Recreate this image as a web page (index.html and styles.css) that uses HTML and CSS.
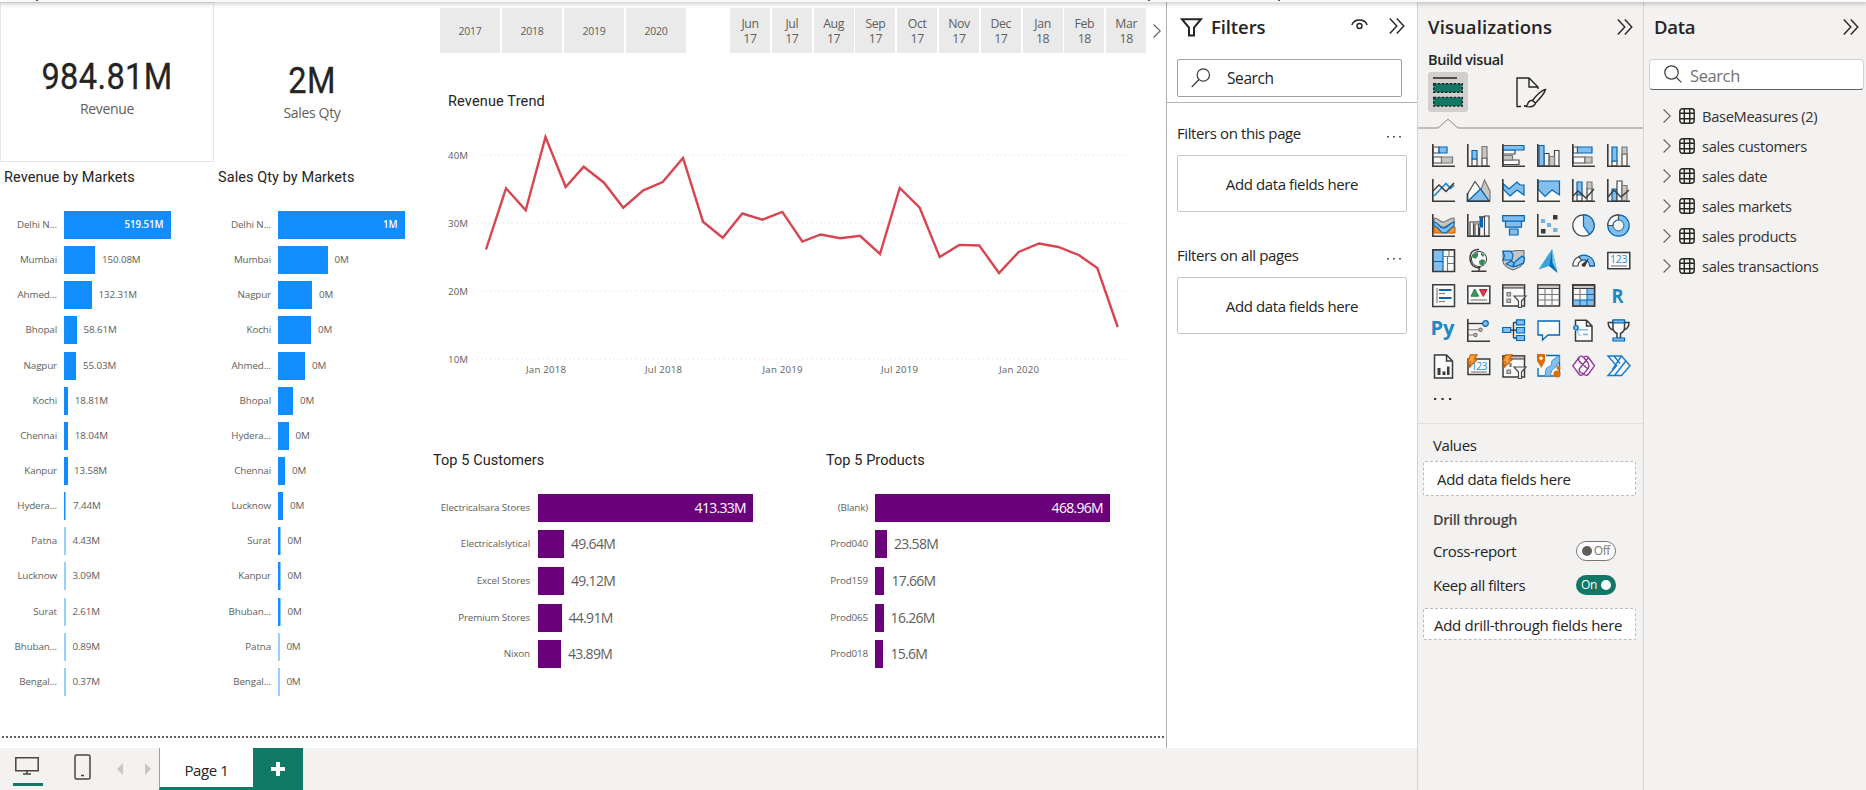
FILE: index.html
```html
<!DOCTYPE html>
<html lang="en">
<head>
<meta charset="utf-8">
<title>Sales Insights</title>
<link rel="stylesheet" href="styles.css">
</head>
<body>
<svg class="defs" width="0" height="0">
  <symbol id="axes" viewBox="0 0 24 24"><path class="ax" d="M.8 0V22.2H23"/></symbol>
  <symbol id="chevrons" viewBox="0 0 16 16"><path class="ln" d="M.8 .6 7.8 8 .8 15.4M7.8 .6l7 7.4-7 7.4"/></symbol>
  <symbol id="table" viewBox="0 0 16 16"><rect class="ln" x=".8" y=".8" width="14.4" height="14.4" rx="2.6"/><path class="ln" d="M5.3 1v14M10.7 1v14M1 5.3h14M1 10.7h14"/></symbol>
  <symbol id="chev" viewBox="0 0 8 14"><path class="thin" d="M.6.5 7.3 7 .6 13.5"/></symbol>
</svg>
<div class="ribbon-edge"></div>
<div class="app">
  <div class="workspace">
    <div class="stage">
      <main class="report">
        <div class="report-body">
          <div class="markets">
            <div class="cards">
              <section class="card framed"><div class="kpi">984.81M</div><div class="kpi-name">Revenue</div></section>
              <section class="card second"><div class="kpi">2M</div><div class="kpi-name">Sales Qty</div></section>
            </div>
            <div class="market-charts">
              <section class="chart rev">
                <h2>Revenue by Markets</h2>
                <div class="rows">
                  <div class="row"><span class="cat">Delhi N...</span><span class="bar in" style="width:106.5px">519.51M</span></div>
                  <div class="row"><span class="cat">Mumbai</span><span class="bar" style="width:31px"></span><span class="val">150.08M</span></div>
                  <div class="row"><span class="cat">Ahmed...</span><span class="bar" style="width:27.5px"></span><span class="val">132.31M</span></div>
                  <div class="row"><span class="cat">Bhopal</span><span class="bar" style="width:12.5px"></span><span class="val">58.61M</span></div>
                  <div class="row"><span class="cat">Nagpur</span><span class="bar" style="width:12px"></span><span class="val">55.03M</span></div>
                  <div class="row"><span class="cat">Kochi</span><span class="bar" style="width:4.4px"></span><span class="val near">18.81M</span></div>
                  <div class="row"><span class="cat">Chennai</span><span class="bar" style="width:4.4px"></span><span class="val near">18.04M</span></div>
                  <div class="row"><span class="cat">Kanpur</span><span class="bar" style="width:3.6px"></span><span class="val near">13.58M</span></div>
                  <div class="row"><span class="cat">Hydera...</span><span class="bar slim" style="width:2px"></span><span class="val">7.44M</span></div>
                  <div class="row"><span class="cat">Patna</span><span class="bar faint" style="width:2px"></span><span class="val near">4.43M</span></div>
                  <div class="row"><span class="cat">Lucknow</span><span class="bar faint" style="width:2px"></span><span class="val near">3.09M</span></div>
                  <div class="row"><span class="cat">Surat</span><span class="bar faint" style="width:2px"></span><span class="val near">2.61M</span></div>
                  <div class="row"><span class="cat">Bhuban...</span><span class="bar faint" style="width:2px"></span><span class="val near">0.89M</span></div>
                  <div class="row"><span class="cat">Bengal...</span><span class="bar faint" style="width:2px"></span><span class="val near">0.37M</span></div>
                </div>
              </section>
              <section class="chart qty">
                <h2>Sales Qty by Markets</h2>
                <div class="rows">
                  <div class="row"><span class="cat">Delhi N...</span><span class="bar in" style="width:126.5px">1M</span></div>
                  <div class="row"><span class="cat">Mumbai</span><span class="bar" style="width:49.5px"></span><span class="val">0M</span></div>
                  <div class="row"><span class="cat">Nagpur</span><span class="bar" style="width:34px"></span><span class="val">0M</span></div>
                  <div class="row"><span class="cat">Kochi</span><span class="bar" style="width:33px"></span><span class="val">0M</span></div>
                  <div class="row"><span class="cat">Ahmed...</span><span class="bar" style="width:27px"></span><span class="val">0M</span></div>
                  <div class="row"><span class="cat">Bhopal</span><span class="bar" style="width:15px"></span><span class="val">0M</span></div>
                  <div class="row"><span class="cat">Hydera...</span><span class="bar" style="width:10.6px"></span><span class="val">0M</span></div>
                  <div class="row"><span class="cat">Chennai</span><span class="bar" style="width:7px"></span><span class="val">0M</span></div>
                  <div class="row"><span class="cat">Lucknow</span><span class="bar" style="width:5px"></span><span class="val">0M</span></div>
                  <div class="row"><span class="cat">Surat</span><span class="bar slim" style="width:2.6px"></span><span class="val">0M</span></div>
                  <div class="row"><span class="cat">Kanpur</span><span class="bar slim" style="width:2.6px"></span><span class="val">0M</span></div>
                  <div class="row"><span class="cat">Bhuban...</span><span class="bar slim" style="width:2.6px"></span><span class="val">0M</span></div>
                  <div class="row"><span class="cat">Patna</span><span class="bar faint" style="width:2px"></span><span class="val near">0M</span></div>
                  <div class="row"><span class="cat">Bengal...</span><span class="bar faint" style="width:2px"></span><span class="val near">0M</span></div>
                </div>
              </section>
            </div>
          </div>
          <div class="insights">
            <div class="slicers">
              <div class="years"><span>2017</span><span>2018</span><span>2019</span><span>2020</span></div>
              <div class="months"><span>Jun<br>17</span><span>Jul<br>17</span><span>Aug<br>17</span><span>Sep<br>17</span><span>Oct<br>17</span><span>Nov<br>17</span><span>Dec<br>17</span><span>Jan<br>18</span><span>Feb<br>18</span><span>Mar<br>18</span></div>
              <svg class="next" width="8" height="14"><use href="#chev"/></svg>
            </div>
            <section class="trend">
              <h2>Revenue Trend</h2>
              <svg class="plot" width="700" height="260" viewBox="440 120 700 260">
                <path class="grid" d="M477 155H1126M477 223H1126M477 291H1126M477 359H1126"/>
                <g class="axis">
                  <text x="448" y="158.5" textLength="20">40M</text><text x="448" y="226.5" textLength="20">30M</text><text x="448" y="294.5" textLength="20">20M</text><text x="448" y="362.5" textLength="20">10M</text>
                  <text x="526" y="372.5" textLength="40">Jan 2018</text><text x="645" y="372.5" textLength="37">Jul 2018</text><text x="762.5" y="372.5" textLength="40">Jan 2019</text><text x="881" y="372.5" textLength="37">Jul 2019</text><text x="999" y="372.5" textLength="40">Jan 2020</text>
                </g>
                <polyline class="line" points="486,249.5 506,188.3 525.7,210.3 545.5,137 565.7,187 583.7,166.7 604,182.7 623.3,207.7 643.3,190.3 662.7,182 683,158 703,221.7 722.7,237.7 742.3,213.5 762.3,219.7 782.3,211.9 802.3,241.5 820.7,234.5 840.3,238.3 860,235.8 880,254 899.7,187.9 919.7,207.7 939.7,257 959.3,244.9 979.3,245.5 999,273 1018.7,252 1039,243.5 1058.3,247 1078.7,255 1097.3,268 1117.7,327"/>
              </svg>
            </section>
            <div class="tops">
              <section class="chart top customers">
                <h2>Top 5 Customers</h2>
                <div class="rows">
                  <div class="row"><span class="cat">Electricalsara Stores</span><span class="bar in" style="width:215px">413.33M</span></div>
                  <div class="row"><span class="cat">Electricalslytical</span><span class="bar" style="width:26px"></span><span class="val">49.64M</span></div>
                  <div class="row"><span class="cat">Excel Stores</span><span class="bar" style="width:26px"></span><span class="val">49.12M</span></div>
                  <div class="row"><span class="cat">Premium Stores</span><span class="bar" style="width:23.5px"></span><span class="val">44.91M</span></div>
                  <div class="row"><span class="cat">Nixon</span><span class="bar" style="width:23px"></span><span class="val">43.89M</span></div>
                </div>
              </section>
              <section class="chart top products">
                <h2>Top 5 Products</h2>
                <div class="rows">
                  <div class="row"><span class="cat">(Blank)</span><span class="bar in" style="width:235px">468.96M</span></div>
                  <div class="row"><span class="cat">Prod040</span><span class="bar" style="width:12px"></span><span class="val">23.58M</span></div>
                  <div class="row"><span class="cat">Prod159</span><span class="bar" style="width:9.4px"></span><span class="val">17.66M</span></div>
                  <div class="row"><span class="cat">Prod065</span><span class="bar" style="width:8.6px"></span><span class="val">16.26M</span></div>
                  <div class="row"><span class="cat">Prod018</span><span class="bar" style="width:8.4px"></span><span class="val">15.6M</span></div>
                </div>
              </section>
            </div>
          </div>
        </div>
        <div class="page-edge"></div>
      </main>
      <aside class="filters">
        <header>
          <div class="pane-title">
            <svg width="21" height="19" viewBox="0 0 21 19"><path d="M1 1.2H20L13 9.5V17.6H8V9.5Z" fill="none" stroke="#252423" stroke-width="2"/></svg>
            <span class="ttl">Filters</span>
            <svg class="eye" width="17" height="11" viewBox="0 0 17 11"><path class="ln" d="M.8 6C2 3 5 1 8.500 1s6.500 2 7.700 5"/><circle class="ln" cx="8.5" cy="7" r="2.5"/></svg>
            <svg width="16" height="16"><use href="#chevrons"/></svg>
          </div>
          <div class="search"><svg width="20" height="20" viewBox="0 0 20 20"><circle class="thin2" cx="12.3" cy="7" r="6.2"/><path class="thin2" d="M8 11.500.7 19"/></svg><span>Search</span></div>
        </header>
        <div class="fsec"><span>Filters on this page</span><svg width="14" height="4"><path class="dots" d="M.2 1h1.600v1.600H.2zM6.200 1h1.600v1.600H6.200zM12.200 1h1.600v1.600h-1.600z"/></svg></div>
        <div class="drop">Add data fields here</div>
        <div class="fsec f2"><span>Filters on all pages</span><svg width="14" height="4"><path class="dots" d="M.2 1h1.600v1.600H.2zM6.200 1h1.600v1.600H6.200zM12.200 1h1.600v1.600h-1.600z"/></svg></div>
        <div class="drop">Add data fields here</div>
      </aside>
    </div>
    <footer class="tabs">
      <div class="view active"><svg width="24" height="18" viewBox="0 0 24 18"><path class="dev" d="M.8.8h22.400v13H.8zM12 14v3M8 17h8"/></svg></div>
      <div class="view phone"><svg width="17" height="26" viewBox="0 0 17 26"><rect class="dev" x="1" y="1" width="15" height="24" rx="1.5"/><path class="dev" d="M7 21.500h3"/></svg></div>
      <svg class="nav" width="34" height="12" viewBox="0 0 34 12"><path d="M6 0V12L0 6ZM28 0V12L34 6Z"/></svg>
      <div class="page">Page 1</div>
      <div class="add"><svg width="14" height="14" viewBox="0 0 14 14"><path d="M7 0V14M0 7H14" stroke="#fff" stroke-width="4"/></svg></div>
    </footer>
  </div>

  <aside class="viz">
    <div class="pane-title"><span class="ttl">Visualizations</span><svg width="16" height="16"><use href="#chevrons"/></svg></div>
    <div class="build">Build visual</div>
    <div class="modes">
      <div class="mode on"><svg width="30" height="30" viewBox="0 0 30 30"><path d="M0 1h24" stroke="#252423" stroke-width="1.5"/><g fill="#117865" stroke="#252423" stroke-width="1.4" stroke-dasharray="2.5 1.5"><rect x=".7" y="6.7" width="28.6" height="8.6"/><rect x=".7" y="20.4" width="28.6" height="8.6"/></g></svg></div>
      <div class="mode"><svg width="31" height="31" viewBox="0 0 31 31" class="ln"><path d="M5 29.500H1V1H13L22 10V12M13 1V10H22"/><path d="M29.500 12.500C26 13 20 18.500 16.500 23.500L19.500 26C23.500 22 28.500 16 29.500 12.500ZM16.500 23.500C13 23 12 25.500 11.500 27.500 11 29 9 29 8 28.800 12 30.500 18.500 30.500 19.500 26"/></svg></div>
    </div>
    <svg class="notch" width="225" height="11" viewBox="0 0 225 11"><path d="M0 9.500H20L30 .7 40 9.500H225"/></svg>
    <div class="gallery">
      <svg viewBox="0 0 24 24"><path class="w" d="M1 3h6v6H1zM1 13h8.500v6H1z"/><path class="b" d="M7 3h8v6H7z"/><path class="g" d="M9.500 13h11v6h-11z"/><use href="#axes"/></svg>
      <svg viewBox="0 0 24 24"><path class="w" d="M5 15h5v7H5zM15 14h5v8h-5z"/><path class="b" d="M5 6.500h5v8.500H5z"/><path class="g" d="M15 2.500h5V14h-5z"/><use href="#axes"/></svg>
      <svg viewBox="0 0 24 24"><path class="w" d="M1 6h12v4H1zM1 16h16v4.500H1z"/><path class="g" d="M1 11.500h9.500V16H1z"/><path class="b" d="M1 1.500h21V6H1z"/><use href="#axes"/></svg>
      <svg viewBox="0 0 24 24"><path class="w" d="M7 9.500h5V22H7zM17.500 6.500H22V22h-4.500z"/><path class="g" d="M12.500 12.500h5V22h-5z"/><path class="b" d="M2 1.500h5V22H2z"/><use href="#axes"/></svg>
      <svg viewBox="0 0 24 24"><path class="w" d="M1 3h4.500v6H1zM1 13h12v6H1z"/><path class="b" d="M5.500 3H20v6H5.500z"/><path class="g" d="M13 13h7v6h-7z"/><use href="#axes"/></svg>
      <svg viewBox="0 0 24 24"><path class="w" d="M5 17h5v5H5zM15 10h5v12h-5z"/><path class="b" d="M5 3h5v14H5z"/><path class="g" d="M15 3h5v7h-5z"/><use href="#axes"/></svg>

      <svg viewBox="0 0 24 24"><path class="bl" d="M2 17 14 4.500l4.500 5L22 6"/><path class="dl" d="M1 12 7 6l7 6.500 8-8.500"/><use href="#axes"/></svg>
      <svg viewBox="0 0 24 24"><path class="g" d="M10 22 17.500 1 23 12V22Z"/><path class="w" d="M.5 15 8 2.500 17 15v7H.5Z"/><path class="b" d="M1 22 13.500 10 22 22Z"/><path class="ax" d="M.5 14V22.200H23"/></svg>
      <svg viewBox="0 0 24 24"><path d="M1 11l7 7 7-6 7 5v5H1z" fill="#fafafa"/><path class="b" d="M1 4.500 7 10l8-7 3 3h4V16L15 11 8 17 1 10Z"/><use href="#axes"/></svg>
      <svg viewBox="0 0 24 24"><path d="M1 9l7 8 7-6 7 5v6H1z" fill="#fafafa"/><path class="b" d="M1 2H22.500V16L15 11 8 17.500 1 10Z"/><use href="#axes"/></svg>
      <svg viewBox="0 0 24 24"><path class="w" d="M5 14h5v8H5zM15 9h5v13h-5z"/><path class="b" d="M5 3h5v13H5z"/><path class="g" d="M15 3h5v7h-5z"/><path class="dl" d="M1 17 6 12l8 7 8-9"/><use href="#axes"/></svg>
      <svg viewBox="0 0 24 24"><path class="b" d="M5 10h5v12H5z"/><path class="w" d="M10 2h5v20h-5z"/><path class="g" d="M15 6.500h5V22h-5z"/><path class="dl" d="M1 18 7 11l7 7 8-7"/><use href="#axes"/></svg>

      <svg viewBox="0 0 24 24"><path d="M2 12h6l3 5h3l3-4h6v6H2z" fill="#f2912a" stroke="#c05a00"/><path class="g" d="M2 4c5 0 6 5 10 4s5-4 10-4v5c-5 0-5 3-10 4S7 9 2 9Z"/><path class="b" d="M2 8c5 0 5 7 10 6s5-5 10-6v4c-4 1-5 7-10 7S7 12 2 12Z"/><use href="#axes"/></svg>
      <svg viewBox="0 0 24 24"><path class="w" d="M3 8h3.500v14H3zM8 8h3.500v14H8zM17.500 2H22v20h-4.500z"/><path class="g" d="M6.500 8h7v2h-7z"/><path d="M12.500 3.500h3.500v10h-3.500z" fill="#0067b8"/><path class="dl" d="M12.500 22V13.500M12 3h5"/><use href="#axes"/></svg>
      <svg viewBox="0 0 24 24"><path class="b" d="M7.500 15h8.500v6H7.500zM.7 1.700h21.600v5.500H.7zM3.500 7.200h16v6h-16z"/></svg>
      <svg viewBox="0 0 24 24"><path fill="#3b3a39" d="M16 1h4.500v4.500H16zM4 15h4.500v4.500H4z"/><path fill="#6fb2e6" d="M4 5h4v4H4zM10 9h4v4h-4zM16 14h4.500v4H16z"/><use href="#axes"/></svg>
      <svg viewBox="0 0 24 24"><circle cx="11.5" cy="11.5" r="10.7" class="w"/><path class="b" d="M11.500.8A10.700 10.700 0 0 1 17.500 20.300L11.500 12Z"/></svg>
      <svg viewBox="0 0 24 24"><circle cx="11.5" cy="11.5" r="10.7" class="b"/><path class="w" d="M11.500.8V6A5.500 5.500 0 0 0 6 11.500H.8A10.700 10.700 0 0 1 11.500.8Z"/><circle cx="11.5" cy="11.5" r="5.4" fill="#f3f2f1" stroke="#0067b8"/></svg>

      <svg viewBox="0 0 24 24"><path class="w" d="M1 1h21.500v21.500H1z"/><path class="b" d="M1 1h10v21.500H1zM1 12.500h10"/><path class="gl" d="M11 7.500h11M17 1v6.500M15.500 7.500v15M15.500 14.500h7"/><path class="frame" d="M.8.8h21.700v21.700H.8z"/></svg>
      <svg viewBox="0 0 24 24"><circle cx="12" cy="10" r="7.6" fill="#fafafa" stroke="#3b3a39"/><path fill="#2f8f4e" d="M6 5.500 11 3v4L8.500 10 5 8zM12 12l3.500-2 3 2-2.500 4.500-3.500-1zM14 3.500l3.500 2.500L16 8l-2-2z"/><path class="dl" d="M12 .5C6 0 2.500 4 3 10s5 10 10.500 8.500M12 18v4M4.500 22.300h15"/></svg>
      <svg viewBox="0 0 24 24"><path fill="#c8c6c4" stroke="#605e5c" d="M1 3c4-1 7 1 10-1 4-1 7 0 11-.5V13c-1 4-6 6-11 8C6 19 1 17 1 12Z"/><path class="b" d="M.8 2.200H9L11 6 10 11H1L2.500 7ZM11 16l3-4 6-5 2.500 2-1 5-8 3.500ZM4 15l5-3 3 2-1 4Z" stroke-width="1"/></svg>
      <svg viewBox="0 0 24 24"><path fill="#38a4d8" d="M15 0 1.500 20.500 12 17Z"/><path fill="#0c6db8" d="m12 17 8.500 7L15 0Z"/><path fill="#74d0ec" d="m15 0 5.500 23-5-9Z"/></svg>
      <svg viewBox="0 0 24 24"><path class="b" d="M7 7.500A10.500 10.500 0 0 1 22.500 17h-5A5.500 5.500 0 0 0 9.500 11.500Z"/><path class="w" d="M.8 17A10.500 10.500 0 0 1 7 7.500L9.500 11.500A6 6 0 0 0 6 17ZM22.500 17h-5"/><path d="M10 15 17 9l-3.500 8c-2 2-5 0-3.500-2Z" fill="#3b3a39"/></svg>
      <svg viewBox="0 0 24 24"><path class="w2" d="M.8 3.500h22v16.300H.8z"/><text class="num" x="3" y="14.2" textLength="17.5">123</text><path class="gl" d="M4 17h16"/></svg>

      <svg viewBox="0 0 24 24"><path class="w2" d="M.8.8h21.700v21.700H.8z"/><path d="M7 6h12.500M7 14h12.500" stroke="#0067b8" stroke-width="2.2"/><path class="gl" d="M5 4v15M7 9.500h6M7 17.500h6"/></svg>
      <svg viewBox="0 0 24 24"><path class="w2" d="M.8 2h22v17.500H.8z"/><path d="M4 12.200h7.500L7.800 5z" fill="#3f9c5c" stroke="#1f7a3d"/><path d="M12.500 5.500h7.500l-3.700 7z" fill="#e03a46" stroke="#b9202c"/><path class="gl" d="M3.500 16h16.500"/></svg>
      <svg viewBox="0 0 24 24"><path class="w2" d="M.8 1h21.700v21H.8z"/><path d="M1 1h21.500v3H1z" class="g2"/><path class="g" d="M5 8.500h3.500V12H5zM5 15h3.500v3.500H5z"/><path class="w" d="M12 12H24l-4.500 5v6.500h-3V17Z"/></svg>
      <svg viewBox="0 0 24 24"><path class="w2" d="M.8 1h21.700v21H.8z"/><path class="g2" d="M.8 1h21.700v3.500H.8z"/><path class="gl" d="M8 4.500V22M15 4.500V22M1 10.500h21.500M1 16h21.500"/></svg>
      <svg viewBox="0 0 24 24"><path class="w2" d="M.8 1h21.700v21H.8z"/><path fill="#83beec" d="M15 4.500h7V22H1.500V16H15Z"/><path class="g2" d="M.8 1h21.700v3.500H.8z"/><path class="gl" d="M8 4.500V16M1 10.500h14"/><path d="M15 4.500V22M8 16v6M15 10.500h7M1 16h21.500" stroke="#0067b8"/><path class="frame" d="M.8 1h21.700v21H.8z"/></svg>
      <svg viewBox="0 0 24 24"><text class="lang" x="4.5" y="18.8" textLength="12" lengthAdjust="spacingAndGlyphs">R</text></svg>

      <svg viewBox="0 0 24 24"><text class="lang" x="-1.5" y="16" textLength="24" lengthAdjust="spacingAndGlyphs">Py</text></svg>
      <svg viewBox="0 0 24 24"><path class="dl" d="M1 4.500h15"/><path class="gl" d="M1 10.800h11M1 16h6"/><circle class="b" cx="18.5" cy="4.5" r="2.8"/><circle class="g" cx="13.5" cy="10.8" r="1.6"/><circle class="g" cx="8.5" cy="16" r="1.6"/><use href="#axes"/></svg>
      <svg viewBox="0 0 24 24"><path class="dl" d="M8 11.200h6M11.500 3.500v15.500M11.500 3.500H15M11.500 19H15"/><path class="b" d="M.7 8.500h8v5h-8zM14.500.8h8v5h-8zM14.500 8.500h8v5.500h-8zM14.500 16.500h8v5h-8z"/></svg>
      <svg viewBox="0 0 24 24"><path d="M1 2h21.500v14H11l-5.500 5V16H1z" fill="#fafafa" stroke="#0067b8" stroke-width="1.3"/></svg>
      <svg viewBox="0 0 24 24"><path class="w2" d="M3.500 12v10H20V7L14.500 1.200H3.500V6M14.500 1.200V7H20"/><path d="M7 10.800h9M11 15.500h5" stroke="#6fb2e6" stroke-width="1.3"/><path d="M6 11v4M9 16h-3" stroke="#6fb2e6"/><circle class="b" cx="4" cy="8.8" r="2.3"/></svg>
      <svg viewBox="0 0 24 24"><path class="w2" d="M6 3.500H1.200c0 4 1.500 6.500 5.300 7.500M17 3.500h5c0 4-1.500 6.500-5.500 7.500"/><path class="w2" d="M6 2H17.500V9c0 3-2 4.500-4 5.500v5h-3.500v-5C8 13.500 6 12 6 9Z"/><path class="b" d="M6 .8h11.500v3H6zM6 19h11.500v3H6z"/></svg>

      <svg viewBox="0 0 24 24"><path class="w2" d="M2.500 1h12L20.500 7V24h-18zM14.500 1v6H20"/><path fill="#3b3a39" d="M5.500 14h3v7h-3zM10.500 17.500h3V21h-3zM15 12.500h2.500V21H15z"/></svg>
      <svg viewBox="0 0 24 24"><path class="w2" d="M1 5h21.700v15.500H1z"/><text class="num" x="4" y="15.7" textLength="16.5">123</text><path class="gl" d="M4 18h16"/><path class="bolt" d="M3.500.8H10L7.500 5h3L1.500 14 3.500 8H.5Z"/></svg>
      <svg viewBox="0 0 24 24"><path class="w2" d="M1 2h21.500v21H1z"/><path class="g2" d="M1 2h21.500v3H1z"/><path class="g" d="M5 16h3.500v3.500H5zM8 9.500h1v3H8z"/><path class="w" d="M12 13H24l-4.500 5v6.500h-3V18Z"/><path class="bolt" d="M3.500.8H10L7.500 5h3L1.500 14 3.500 8H.5Z"/></svg>
      <svg viewBox="0 0 24 24"><path d="M9 1.500H22.500V22H1V14" fill="#fafafa" stroke="#0067b8" stroke-width="1.3"/><path d="M22 1.500 15 6.500l-1 5-5 3-1 7.500h5l2-6 5-4 2.500-5Z" fill="#83beec" stroke="#4b97d2"/><path d="M0 0h8v7L4.500 14 0 7z" fill="#e06c00"/><circle cx="4" cy="4.2" r="1.7" fill="#fff"/><circle cx="20" cy="20" r="3.5" fill="#e06c00"/><circle cx="21.5" cy="14" r="2" fill="#e06c00"/></svg>
      <svg viewBox="0 0 24 24"><path d="M.8 11.800 7 3.500Q8.500 1.500 10.500 2.500L11.700 3.700 13 2.500Q15 1.500 16.500 3.500L22.500 11.800 16.500 20Q15 22 13 21L11.700 19.800 10.500 21Q8.500 22 7 20ZM11.700 3.700l4.500 5.500q1.500 2.600 0 5.200l-4.500 5.400M16.500 3.500 7.500 14.500q-1 2.500 1 4l3.200 1.300M7 3.500q-1 3 1 4.500l8 7" fill="#fafafa" stroke="#8c2f9b" stroke-width="1.3"/></svg>
      <svg viewBox="0 0 24 24"><path d="M1 2h13.500L23 11.800 14.500 21.500H1L9.500 11.800ZM7 2l6 7.500M14.500 2 5.500 15.500M18.500 7.500 7.500 21.500" fill="#fafafa" stroke="#1478d4" stroke-width="1.4"/></svg>
    </div>
    <div class="more"><svg width="18" height="4"><path class="dots" d="M0 1h2.200v2H0zM7.500 1h2.200v2H7.500zM15 1h2.200v2H15z"/></svg></div>
    <div class="wells">
      <div class="lbl">Values</div>
      <div class="well">Add data fields here</div>
      <div class="lbl head">Drill through</div>
      <div class="opt"><span>Cross-report</span><span class="toggle off"><i></i><b>Off</b></span></div>
      <div class="opt keep"><span>Keep all filters</span><span class="toggle on"><b>On</b><i></i></span></div>
      <div class="well drill">Add drill-through fields here</div>
    </div>
  </aside>

  <aside class="data">
    <div class="pane-title"><span class="ttl">Data</span><svg width="16" height="16"><use href="#chevrons"/></svg></div>
    <div class="find"><svg width="18" height="18" viewBox="0 0 18 18"><circle class="thin2" cx="7.5" cy="7.5" r="6.7"/><path class="thin2" d="m12.300 12.300 5 5"/></svg><span>Search</span></div>
    <ul>
      <li><svg width="8" height="14"><use href="#chev"/></svg><svg width="16" height="16"><use href="#table"/></svg><span>BaseMeasures (2)</span></li>
      <li><svg width="8" height="14"><use href="#chev"/></svg><svg width="16" height="16"><use href="#table"/></svg><span>sales customers</span></li>
      <li><svg width="8" height="14"><use href="#chev"/></svg><svg width="16" height="16"><use href="#table"/></svg><span>sales date</span></li>
      <li><svg width="8" height="14"><use href="#chev"/></svg><svg width="16" height="16"><use href="#table"/></svg><span>sales markets</span></li>
      <li><svg width="8" height="14"><use href="#chev"/></svg><svg width="16" height="16"><use href="#table"/></svg><span>sales products</span></li>
      <li><svg width="8" height="14"><use href="#chev"/></svg><svg width="16" height="16"><use href="#table"/></svg><span>sales transactions</span></li>
    </ul>
  </aside>
</div>
</body>
</html>
```

FILE: styles.css
```css
* { box-sizing: border-box; }
body { margin: 0; width: 1866px; height: 790px; overflow: hidden; background: #fff; color: #252423; font: 15px/20px "Open Sans", "Noto Sans", sans-serif; letter-spacing: -.4px; }
svg { display: block; flex: none; overflow: visible; }
.defs { position: absolute; }
h2 { margin: 0; font: 400 14.5px/20px Roboto, sans-serif; letter-spacing: .07px; white-space: nowrap; }

/* shared strokes */
.ax { fill: none; stroke: #3b3a39; stroke-width: 1.6; }
.ln { fill: none; stroke: #252423; stroke-width: 1.4; }
.thin { fill: none; stroke: #605e5c; stroke-width: 1.1; }
.thin2 { fill: none; stroke: #3b3a39; stroke-width: 1.2; }
.dots { fill: #323130; }

.ribbon-edge { height: 2px; background: linear-gradient(#555, #555) 36px 0 / 2px 1px no-repeat, linear-gradient(#555, #555) 1148px 0 / 2px 1px no-repeat, linear-gradient(#555, #555) 1278px 0 / 2px 1px no-repeat, #fafafa; box-shadow: 0 1px 4px 1px rgba(0,0,0,.22); position: relative; z-index: 2; }
.app { display: flex; height: 788px; }
.workspace { width: 1417px; display: flex; flex-direction: column; }
.stage { height: 746px; display: flex; }
.report { width: 1166px; }
.report-body { display: flex; height: 734px; }
.page-edge { height: 2px; margin: 0 2px; background: repeating-linear-gradient(90deg, #605e5c 0 2px, transparent 2px 4px); }

/* left half of the report */
.markets { width: 420px; }
.cards { display: flex; height: 160px; }
.card { width: 214px; padding-top: 54px; text-align: center; }
.card.framed { border: 1px solid #e6e6e6; }
.card.second { width: 196px; padding-top: 59px; }
.kpi { font: 400 36px/40px Roboto, sans-serif; letter-spacing: .4px; transform: scaleX(.905); white-space: nowrap; -webkit-text-stroke: .3px #252423; }
.kpi-name { font-size: 14px; line-height: 20px; color: #605e5c; letter-spacing: -.35px; margin-top: 2px; }
.market-charts { display: flex; }
.chart .rows { display: flex; flex-direction: column; }
.row { display: flex; align-items: center; height: 35.15px; font-size: 9.8px; letter-spacing: -.12px; color: #605e5c; white-space: nowrap; }
.cat { width: 57px; margin-right: 7px; text-align: right; flex: none; }
.bar { height: 28px; background: #118dff; flex: none; display: block; }
.bar.in { color: #fff; font-weight: 600; line-height: 28px; text-align: right; padding-right: 7px; }
.bar.slim { border-right: 1px solid #8bc5ff; }
.bar.faint { background: #9bcdff; }
.val { margin-left: 7px; }
.val.near { margin-left: 6.4px; }
.rev { width: 214px; padding-top: 6px; }
.rev h2 { padding-left: 4px; }
.rev .rows, .qty .rows { padding-top: 19.5px; }
.qty { padding-top: 6px; }
.qty h2 { padding-left: 4px; }

/* right half of the report */
.insights { width: 746px; }
.slicers { display: flex; padding: 6px 0 0 20px; color: #605e5c; }
.years, .months { display: flex; gap: 2px; text-align: center; }
.years span { width: 60px; height: 45px; background: #eaeaea; font-size: 10.5px; line-height: 47px; letter-spacing: -.3px; }
.months { margin-left: 44px; gap: 1.8px; }
.months span { width: 40px; height: 45px; background: #eaeaea; font-size: 12.3px; line-height: 14.7px; padding-top: 9px; letter-spacing: -.4px; }
.next { margin: 16px 0 0 7px; }
.trend { padding: 39px 0 0 20px; height: 340px; }
.trend h2 { padding-left: 8px; letter-spacing: .15px; }
.plot { margin-top: 8px; }
.grid { stroke: #d8d8d8; stroke-width: 1; stroke-dasharray: 1 3.4; }
.axis text { font-size: 9.7px; letter-spacing: 0; fill: #605e5c; }
.line { fill: none; stroke: #d64550; stroke-width: 2.4; stroke-linejoin: miter; }
.tops { display: flex; padding-top: 58px; }
.top .rows { padding-top: 18.6px; }
.top .row { height: 36.6px; }
.top .bar { background: #6b007b; height: 28px; }
.top .val, .top .bar.in { font-size: 14px; font-weight: 400; letter-spacing: -.7px; }
.customers { width: 393px; }
.customers h2 { padding-left: 13px; }
.customers .cat { width: 110px; margin-right: 8px; }
.products h2 { padding-left: 13px; }
.products .cat { width: 55px; }

/* panes */
.pane-title { display: flex; align-items: center; }
.ttl { font-size: 18.5px; font-weight: 600; line-height: 24px; letter-spacing: -.3px; flex: 1; }
.filters { width: 251px; border-left: 1px solid #b3b0ad; }
.filters header { height: 101px; padding: 13px 0 0 10px; border-bottom: 1px solid #b3b0ad; }
.filters .pane-title { padding: 0 12px 0 4px; height: 24px; }
.filters .ttl { padding-left: 9px; letter-spacing: -.1px; }
.eye { margin: -5px 21px 0 0; }
.filters .pane-title svg:last-child { margin-top: -2px; }
.search { width: 225px; height: 38px; margin-top: 20px; border: 1px solid #a19f9d; border-radius: 2px; display: flex; align-items: center; padding-left: 13px; gap: 16px; font-size: 15.5px; }
.fsec { display: flex; justify-content: space-between; align-items: center; padding: 0 16px 0 10px; margin-top: 20px; height: 20px; }
.fsec svg { margin-top: 7px; }
.fsec.f2 { margin-top: 33px; }
.drop { width: 230px; height: 57px; margin: 12px 0 0 10px; border: 1px solid #c8c6c4; border-radius: 2px; text-align: center; line-height: 57px; }

.viz, .data { background: #f3f2f1; }
.viz { width: 227px; border: solid #d6d4d2; border-width: 0 1px; }
.viz .pane-title { padding: 13px 10px 0 10px; }
.viz .ttl { letter-spacing: .1px; }
.build { padding-left: 10px; margin-top: 11px; height: 20px; font-weight: 600; font-size: 14.5px; }
.modes { display: flex; padding-left: 10px; margin-top: 2px; gap: 43px; }
.mode { width: 40px; height: 40px; padding: 5px; }
.mode.on { background: #d2d0ce; border-radius: 3px; }
.notch { margin-top: 6px; padding-top: 0; fill: none; stroke: #8a8886; height: 12px; }
.gallery { display: grid; grid-template-columns: repeat(6, 35px); grid-auto-rows: 35px; padding: 13.500px 0 0 14px; height: 263px; }
.gallery svg { width: 24px; height: 24px; }
.w { fill: #fafafa; stroke: #4a4948; stroke-width: 1.2; }
.w2 { fill: #fafafa; stroke: #3b3a39; stroke-width: 1.5; }
.frame { fill: none; stroke: #3b3a39; stroke-width: 1.5; }
.b { fill: #83beec; stroke: #0067b8; stroke-width: 1.2; }
.g { fill: #c8c6c4; stroke: #797775; stroke-width: 1.2; }
.g2 { fill: #c8c6c4; stroke: #3b3a39; stroke-width: 1.2; }
.dl { fill: none; stroke: #3b3a39; stroke-width: 1.4; }
.bl { fill: none; stroke: #1f86d0; stroke-width: 1.7; }
.gl { fill: none; stroke: #797775; stroke-width: 1.1; }
.bolt { fill: #f9a13c; stroke: #c85f00; stroke-width: 1.2; }
.num { font-size: 10.5px; fill: #2b8bd3; letter-spacing: 0; }
.lang { font-size: 20px; font-weight: 700; fill: #2086c5; letter-spacing: 0; }
.more { padding: 4px 0 0 16px; height: 31px; border-bottom: 1px solid #e1dfdd; }
.wells { padding: 11px 7px 0 5px; }
.lbl { padding-left: 10px; height: 20px; }
.lbl.head { margin-top: 14px; color: #484644; font-weight: 600; font-size: 14.5px; }
.well { height: 35px; margin-top: 6px; border: 1px dashed #bdbbb9; border-radius: 2px; background: #fff; line-height: 34px; padding-left: 13px; white-space: nowrap; letter-spacing: -.33px; }
.well.drill { height: 32px; line-height: 32px; padding-left: 10px; margin-top: 13px; letter-spacing: -.3px; }
.opt { display: flex; justify-content: space-between; align-items: center; padding: 0 20px 0 10px; height: 20px; margin-top: 11px; }
.opt.keep { margin-top: 14px; }
.toggle { width: 40px; height: 20px; border-radius: 10px; display: flex; align-items: center; padding: 0 5px; justify-content: space-between; font-size: 12px; }
.toggle b { font-weight: 400; }
.toggle i { width: 10px; height: 10px; border-radius: 50%; background: #605e5c; }
.toggle.off { border: 1px solid #797775; background: #fff; color: #797775; }
.toggle.on { background: #117865; color: #fff; }
.toggle.on i { background: #fff; }

.data { width: 222px; }
.data .pane-title { padding: 13px 7px 0 10px; }
.find { margin: 20px 2px 0 5px; height: 31px; border: 1px solid #d1d1d1; border-bottom-color: #616161; border-radius: 4px; background: #fff; display: flex; align-items: center; padding: 0 0 2px 14px; gap: 8px; font-size: 16.5px; color: #707070; line-height: 30px; }
.find span { padding-top: 4px; }
.data ul { list-style: none; margin: 11px 0 0; padding: 0 0 0 19px; }
.data li { display: flex; align-items: center; height: 30px; font-size: 14.7px; letter-spacing: -.33px; color: #323130; }
.data li svg + svg { margin: 0 7px 0 8px; }

/* page tabs */
.tabs { height: 42px; background: #f3f2f1; display: flex; }
.view { width: 30px; margin-left: 13px; padding: 9px 3px 0 2px; }
.view.active { height: 38px; border-bottom: 3px solid #117865; }
.view.phone { margin-left: 31px; padding: 6px 0 0; width: 17px; }
.dev { fill: none; stroke: #484644; stroke-width: 1.5; }
.nav { margin: 15px 0 0 26px; fill: #c8c6c4; }
.page { margin-left: 8px; width: 94px; height: 42px; background: #fff; border-left: 1px solid #a19f9d; border-bottom: 3px solid #117865; text-align: center; line-height: 44px; }
.add { width: 50px; background: #117865; display: flex; align-items: center; justify-content: center; }
```
